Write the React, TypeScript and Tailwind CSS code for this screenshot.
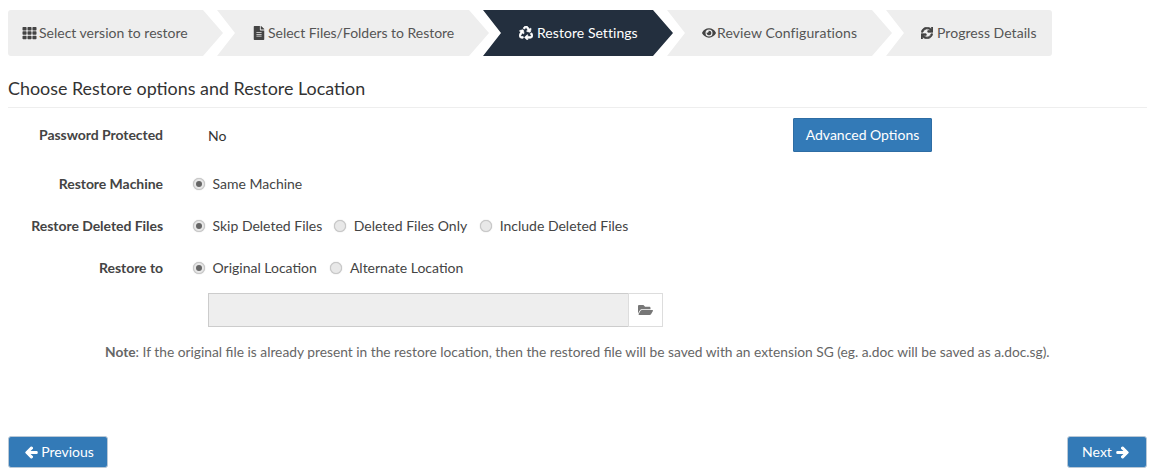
import { FaArrowLeft, FaArrowRight, FaEye, FaFileAlt, FaFolderOpen, FaRecycle, FaSync, FaTh } from "react-icons/fa";

function Radio({ label, checked = false, className = "" }: { label: string; checked?: boolean; className?: string }) {
  return (
    <label className={`flex items-center ${className}`}>
      <span className="flex h-3 w-3 items-center justify-center rounded-full border border-[#c8c8c8] bg-[#e8e8e8] shadow-[0_0_1px_#aaa]">
        {checked && <span className="h-1.5 w-1.5 rounded-full bg-[#666]" />}
      </span>
      <span className="ml-[7.5px] text-[#444]">{label}</span>
    </label>
  );
}

export default function App() {
  return (
    <div className="h-[474px] w-[1155px] overflow-hidden bg-white px-2 pt-[10px] text-sm text-[#333] font-['Lato',sans-serif]">
      <div className="flex h-[46px] whitespace-nowrap text-[#555]">
        <div className="flex w-[215px] items-center rounded-l-[3px] bg-[#eeeeee] pl-[14px] [clip-path:polygon(0_0,195px_0,100%_50%,195px_100%,0_100%)]">
          <FaTh className="mr-[2px] h-[14px] w-[15px] text-[#444]" />
          Select version to restore
        </div>
        <div className="-ml-[6px] flex w-[272px] items-center bg-[#eeeeee] pl-[36px] [clip-path:polygon(0_0,252px_0,100%_50%,252px_100%,0_100%,18px_50%)]">
          <FaFileAlt className="mr-[3px] h-[14px] w-[12px] text-[#444]" />
          <span className="tracking-[-0.03px]">Select Files/Folders to Restore</span>
        </div>
        <div className="-ml-[6px] flex w-[190px] items-center bg-[#232f3e] pl-[36px] text-white [clip-path:polygon(0_0,170px_0,100%_50%,170px_100%,0_100%,18px_50%)]">
          <FaRecycle className="mr-[4px] h-[14px] w-[14px] stroke-[24]" />
          <span className="tracking-[0.05px]">Restore Settings</span>
        </div>
        <div className="-ml-[6px] flex w-[225px] items-center bg-[#eeeeee] pl-[35px] [clip-path:polygon(0_0,205px_0,100%_50%,205px_100%,0_100%,18px_50%)]">
          <FaEye className="mr-[1px] h-[14px] w-[14px] text-[#444]" />
          <span className="tracking-[0.1px]">Review Configurations</span>
        </div>
        <div className="-ml-[6px] flex w-[166px] items-center rounded-r-[3px] bg-[#eeeeee] pl-[35px] [clip-path:polygon(0_0,100%_0,100%_100%,0_100%,18px_50%)]">
          <FaSync className="mr-[4px] h-3 w-3 stroke-[30] text-[#444]" />
          <span className="tracking-[0.05px]">Progress Details</span>
        </div>
      </div>

      <div className="h-[52px] w-[1139px] border-b border-[#eeeeee] pt-[19px] text-[17.9px] leading-[26px] text-[#333]">
        Choose Restore options and Restore Location
      </div>

      <div className="mt-[9px] flex h-[35px] items-center">
        <div className="w-[155px] text-right font-bold tracking-[-0.05px] text-[#444]">Password Protected</div>
        <div className="ml-[45px] w-[585px] pt-[2px]">No</div>
        <button className="h-[34px] w-[139px] rounded-[1px] border border-[#2e6da4] bg-[#337ab7] text-white">Advanced Options</button>
      </div>

      <div className="mt-[15px] flex h-[34px] items-center">
        <div className="w-[155px] text-right font-bold tracking-[-0.05px] text-[#444]">Restore Machine</div>
        <div className="ml-[30px] flex">
          <Radio label="Same Machine" checked />
        </div>
      </div>

      <div className="mt-[8px] flex h-[34px] items-center">
        <div className="w-[155px] text-right font-bold tracking-[-0.05px] text-[#444]">Restore Deleted Files</div>
        <div className="ml-[30px] flex gap-[12px]">
          <Radio label="Skip Deleted Files" checked />
          <Radio label="Deleted Files Only" />
          <Radio label="Include Deleted Files" className="ml-[1px]" />
        </div>
      </div>

      <div className="mt-[8px] flex h-[34px] items-center">
        <div className="w-[155px] text-right font-bold tracking-[-0.05px] text-[#444]">Restore to</div>
        <div className="ml-[30px] flex gap-[13.5px]">
          <Radio label="Original Location" checked />
          <Radio label="Alternate Location" />
        </div>
      </div>

      <div className="ml-[200px] mt-[8px] flex h-[34px] w-[455px]">
        <div className="h-full w-[421px] border border-[#cccccc] bg-[#eeeeee]" />
        <div className="-ml-[1px] flex h-full w-[35px] items-center justify-center border border-[#dddddd] bg-white">
          <FaFolderOpen className="h-[14px] w-[15px] text-[#777]" />
        </div>
      </div>

      <p className="ml-[97px] mt-[15px] text-[13.77px] leading-5 text-[#666]">
        <b className="font-bold">Note</b>: If the original file is already present in the restore location, then the restored file will be saved with an extension SG (eg. a.doc will be saved as a.doc.sg).
      </p>

      <div className="mt-[74px] flex w-[1139px] justify-between">
        <button className="flex h-[32px] w-[100px] items-center justify-center rounded-[3px] border border-[#b9c8d6] bg-[#337ab7] pl-[3px] text-white">
          <FaArrowLeft className="mr-[3px] h-[13px] w-[13px] stroke-[40]" />
          Previous
        </button>
        <button className="flex h-[32px] w-[80px] items-center justify-center rounded-[3px] border border-[#b9c8d6] bg-[#337ab7] pr-[3px] text-white">
          Next
          <FaArrowRight className="ml-[4px] h-[13px] w-[13px] stroke-[40]" />
        </button>
      </div>
    </div>
  );
}
